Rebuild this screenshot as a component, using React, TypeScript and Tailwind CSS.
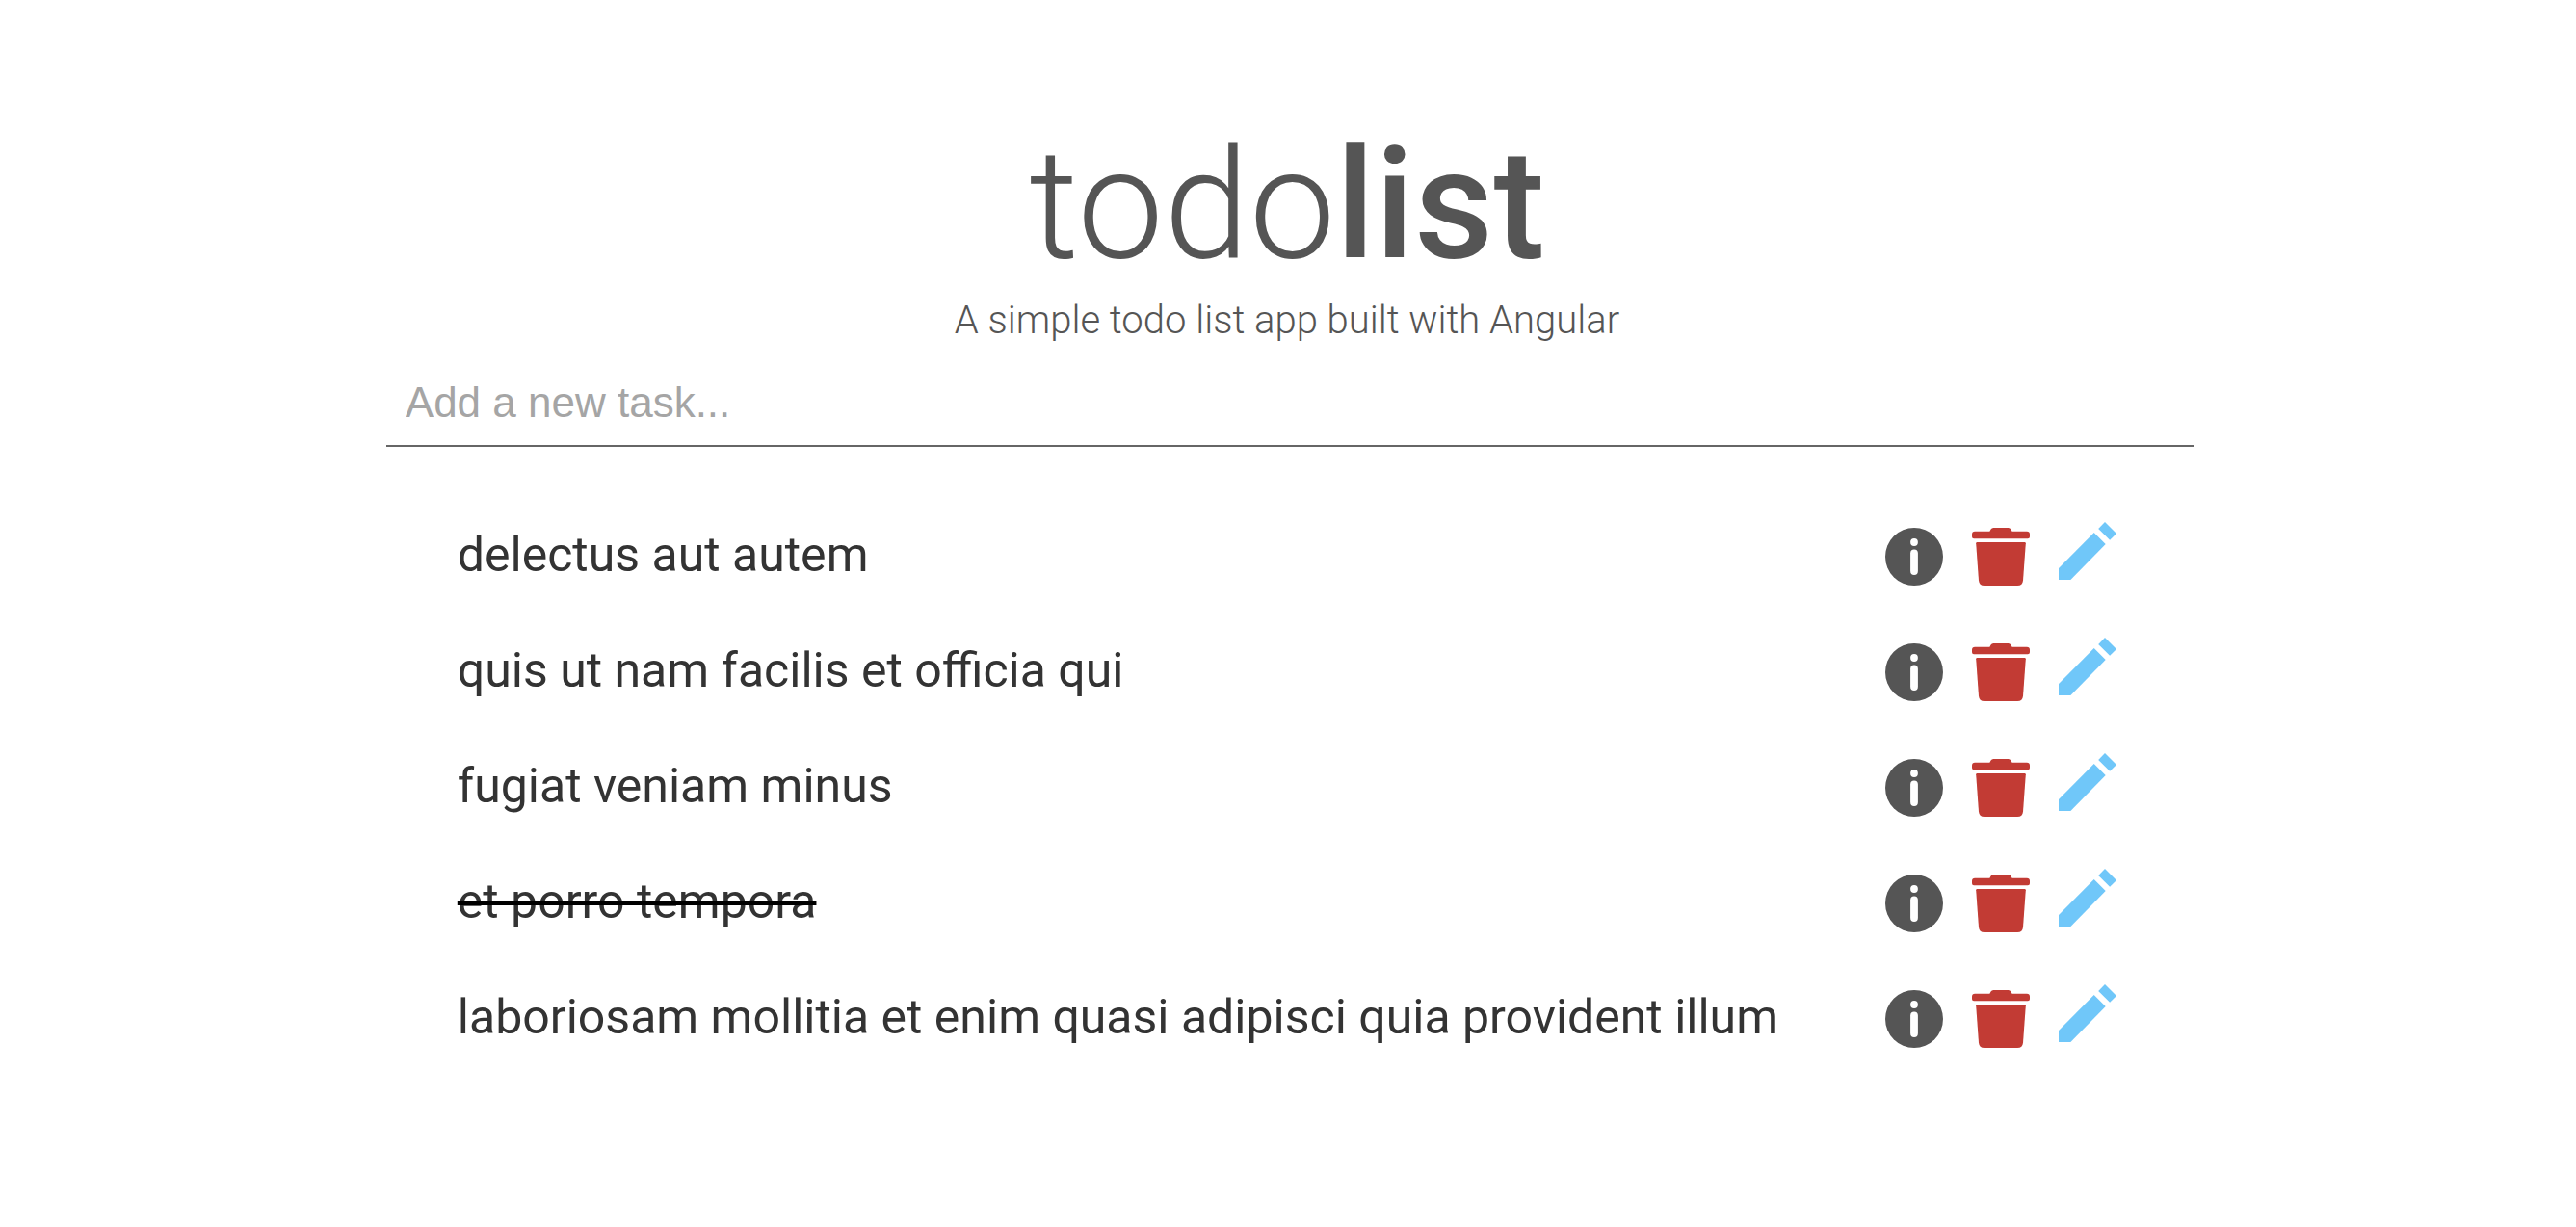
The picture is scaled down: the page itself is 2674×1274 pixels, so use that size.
import { useState } from 'react';

type Task = { id: number; title: string; done: boolean };

const initialTasks: Task[] = [
  { id: 1, title: 'delectus aut autem', done: false },
  { id: 2, title: 'quis ut nam facilis et officia qui', done: false },
  { id: 3, title: 'fugiat veniam minus', done: false },
  { id: 4, title: 'et porro tempora', done: true },
  { id: 5, title: 'laboriosam mollitia et enim quasi adipisci quia provident illum', done: false },
];

function InfoIcon() {
  return (
    <svg viewBox="0 0 60 60" className="size-[60px]" aria-hidden="true">
      <circle cx="30" cy="30" r="30" fill="#555555" />
      <circle cx="30" cy="15" r="3.9" fill="#ffffff" />
      <rect x="26.1" y="22.5" width="7.8" height="26.5" rx="3.9" fill="#ffffff" />
    </svg>
  );
}

function TrashIcon() {
  return (
    <svg viewBox="0 0 60 60" className="size-[60px]" fill="#c23b34" aria-hidden="true">
      <path d="M3 3.8H18.4L19.6 1.6Q20.5 0 22.3 0H37.7Q39.5 0 40.4 1.6L41.6 3.8H57Q60 3.8 60 6.8V9.2Q60 11.2 58 11.2H2Q0 11.2 0 9.2V6.8Q0 3.8 3 3.8Z" />
      <path d="M5.3 15H54.7Q55.8 15 55.8 16.2L53 54.7Q52.5 60 47.2 60H12.8Q7.5 60 7 54.7L4.2 16.2Q4.2 15 5.3 15Z" />
    </svg>
  );
}

function PencilIcon() {
  return (
    <svg viewBox="0 0 60 60" className="size-[60px]" fill="#70c7f9" aria-hidden="true">
      <path d="M0 48 36.7 11.1 48.7 23.1 12.4 60H0Z" />
      <path d="M41.2 6.9 48 0 60 12 53.1 18.8Z" />
    </svg>
  );
}

export default function App() {
  const [tasks, setTasks] = useState<Task[]>(initialTasks);
  const [draft, setDraft] = useState('');

  const toggle = (id: number) =>
    setTasks((list) => list.map((t) => (t.id === id ? { ...t, done: !t.done } : t)));

  return (
    <div className="min-h-screen bg-white pt-[117px] pr-[2px] pb-16 font-['Roboto',sans-serif]">
      <main className="mx-auto w-[70%]">
        <header className="text-center font-light text-[#555555]">
          <h1 className="text-[160px] leading-[192px]">
            todo<span className="font-medium">list</span>
          </h1>
          <p className="text-[40px] leading-[48px]">A simple todo list app built with Angular</p>
        </header>

        <form
          onSubmit={(e) => {
            e.preventDefault();
            if (!draft.trim()) return;
            setTasks([...tasks, { id: Date.now(), title: draft, done: false }]);
            setDraft('');
          }}
        >
          <input
            type="text"
            aria-label="New task"
            placeholder="Add a new task..."
            value={draft}
            onChange={(e) => setDraft(e.target.value)}
            className="mt-4 block h-[91px] w-[calc(100%+6px)] border-b-2 border-[#666666] px-5 font-['Liberation_Sans',Arial,sans-serif] text-[44px] text-[#333333] outline-none placeholder:text-[#a5a5a5]"
          />
        </form>

        <ul className="mt-[54px] px-[74px]">
          {tasks.map((task) => (
            <li key={task.id} className="flex min-h-[120px] items-center justify-between">
              <button
                type="button"
                onClick={() => toggle(task.id)}
                className={
                  task.done
                    ? 'pb-1 text-left text-[50px] leading-[60px] text-[#333333] line-through decoration-black decoration-4'
                    : 'pb-1 text-left text-[50px] leading-[60px] text-[#333333]'
                }
              >
                {task.title}
              </button>
              <div className="flex shrink-0 gap-[30px]">
                <button type="button" aria-label="Task details">
                  <InfoIcon />
                </button>
                <button
                  type="button"
                  aria-label="Delete task"
                  onClick={() => setTasks(tasks.filter((t) => t.id !== task.id))}
                >
                  <TrashIcon />
                </button>
                <button type="button" aria-label="Edit task" className="pb-3">
                  <PencilIcon />
                </button>
              </div>
            </li>
          ))}
        </ul>
      </main>
    </div>
  );
}
